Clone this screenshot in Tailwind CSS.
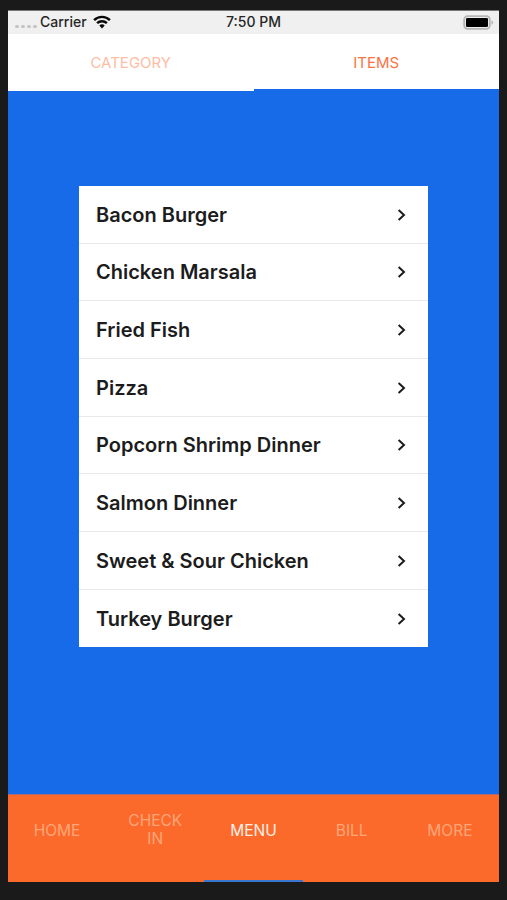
<!DOCTYPE html>
<html lang="en">
<head>
  <meta charset="UTF-8" />
  <title>Menu Items</title>
  <meta name="viewport" content="width=device-width, initial-scale=1.0" />
  <script src="https://cdn.jsdelivr.net/npm/@tailwindcss/browser@4"></script>
</head>
<body class="h-[900px] overflow-hidden bg-[#1a1a1a] pl-2 pr-2 pt-[10px] pb-[18px] font-['Inter',sans-serif]">
  <div class="flex h-[872px] w-[491px] flex-col bg-[#186be8]">

    <!-- Status bar -->
    <header class="grid h-[24px] shrink-0 grid-cols-3 items-center border-t border-[#777] bg-[#f0f0f0] text-[14px] font-medium text-[#262626]">
      <div class="flex items-center pl-[7px]">
        <div class="mt-[7px] flex gap-[2px]">
          <span class="h-[3px] w-[4px] rounded-full bg-[#c4c4c4]"></span>
          <span class="h-[3px] w-[4px] rounded-full bg-[#c4c4c4]"></span>
          <span class="h-[3px] w-[4px] rounded-full bg-[#c4c4c4]"></span>
          <span class="h-[3px] w-[4px] rounded-full bg-[#c4c4c4]"></span>
        </div>
        <span class="-mt-px ml-[3px] leading-none">Carrier</span>
        <svg class="-mt-px ml-[6px] h-[14px] w-[18px]" viewBox="0 0 18 14" fill="none" stroke="#080808" stroke-width="2.4">
          <path d="M1.1 5.1a11.2 11.2 0 0 1 15.8 0" />
          <path d="M4.1 8.2a7 7 0 0 1 9.8 0" />
          <path d="M9 13.4 6.3 10.6a3.9 3.9 0 0 1 5.4 0z" fill="#080808" stroke="none" />
        </svg>
      </div>
      <span class="-mt-px text-center leading-none">7:50 PM</span>
      <svg class="-mt-px ml-auto mr-[5px] h-[15px] w-[31px]" viewBox="0 0 31 15">
        <rect x="1.2" y="1.2" width="25.6" height="12.6" rx="3.4" fill="#eee" stroke="#b5b5b5" stroke-width="1.8" />
        <rect x="3" y="3" width="22" height="9" rx="1.3" fill="#000" />
        <path d="M28.5 5.4a2.3 2.3 0 0 1 0 4.4z" fill="#b5b5b5" />
      </svg>
    </header>

    <!-- Top tabs -->
    <nav class="grid h-[57px] shrink-0 grid-cols-2 bg-white text-center text-[15px] leading-[57px]">
      <a class="text-[#fdbda4]">CATEGORY</a>
      <a class="h-[57px] border-b-2 border-[#186be8] text-[#fb7341]">ITEMS</a>
    </nav>

    <!-- Items -->
    <main class="flex flex-1 flex-col pt-[94.5px]">
      <ul class="mx-auto h-[461.5px] w-[349px] divide-y divide-[#e9e9e9] bg-white pt-[0.6px] text-[20px] font-semibold text-[#1c1c1c]" id="items"></ul>
    </main>

    <!-- Bottom tabs -->
    <footer class="grid h-[88px] shrink-0 grid-cols-5 border-t border-[#a96a75] bg-[#fc6a2b] text-center text-[15.5px] leading-[18px] text-[#fea679]">
      <a class="flex items-center justify-center pb-[16px]">HOME</a>
      <a class="flex items-center justify-center pb-[17px]"><span class="w-[60px]">CHECK IN</span></a>
      <a class="flex items-center justify-center border-b-2 border-[#3876cf] pb-[14px] text-[#fff0e8]">MENU</a>
      <a class="flex items-center justify-center pb-[16px]">BILL</a>
      <a class="flex items-center justify-center pb-[16px]">MORE</a>
    </footer>
  </div>

  <script>
    const items = [
      "Bacon Burger",
      "Chicken Marsala",
      "Fried Fish",
      "Pizza",
      "Popcorn Shrimp Dinner",
      "Salmon Dinner",
      "Sweet &amp; Sour Chicken",
      "Turkey Burger"
    ];

    document.getElementById("items").innerHTML = items.map(name => `
      <li class="flex h-[57.65px] items-center justify-between pt-[0.8px] pl-[17px] pr-[22px]">
        <span>${name}</span>
        <svg class="h-[12px] w-[9px]" viewBox="0 0 9 12" fill="none" stroke="#1c1c1c" stroke-width="2">
          <path d="M1.6 1 7 6 1.6 11" />
        </svg>
      </li>`).join("");
  </script>
</body>
</html>
